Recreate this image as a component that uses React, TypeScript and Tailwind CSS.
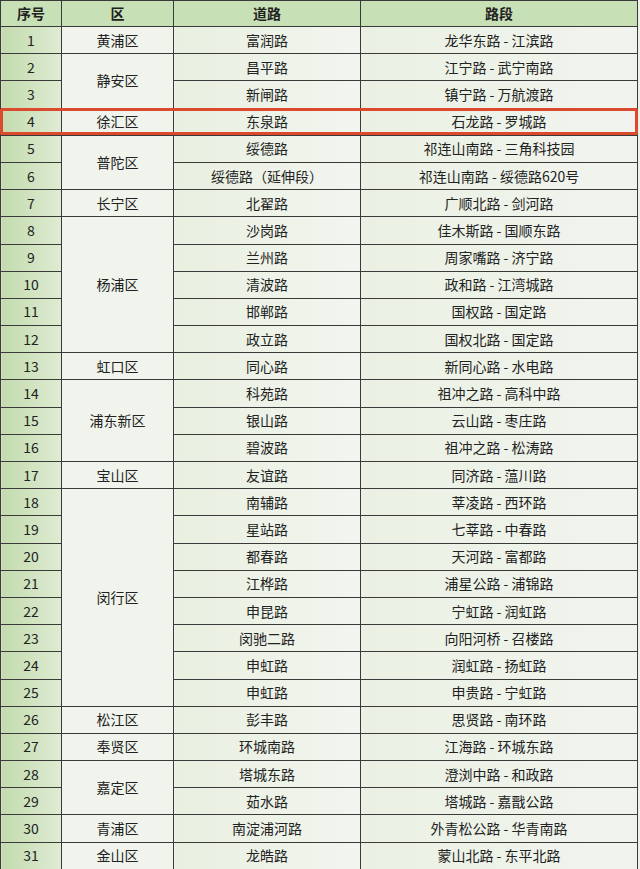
import React from 'react';

type Row = {
  no: number;
  district?: string;
  span?: number;
  road: string;
  section: string;
};

const rows: Row[] = [
  { no: 1, district: '黄浦区', road: '富润路', section: '龙华东路 - 江滨路' },
  { no: 2, district: '静安区', span: 2, road: '昌平路', section: '江宁路 - 武宁南路' },
  { no: 3, road: '新闸路', section: '镇宁路 - 万航渡路' },
  { no: 4, district: '徐汇区', road: '东泉路', section: '石龙路 - 罗城路' },
  { no: 5, district: '普陀区', span: 2, road: '绥德路', section: '祁连山南路 - 三角科技园' },
  { no: 6, road: '绥德路（延伸段）', section: '祁连山南路 - 绥德路620号' },
  { no: 7, district: '长宁区', road: '北翟路', section: '广顺北路 - 剑河路' },
  { no: 8, district: '杨浦区', span: 5, road: '沙岗路', section: '佳木斯路 - 国顺东路' },
  { no: 9, road: '兰州路', section: '周家嘴路 - 济宁路' },
  { no: 10, road: '清波路', section: '政和路 - 江湾城路' },
  { no: 11, road: '邯郸路', section: '国权路 - 国定路' },
  { no: 12, road: '政立路', section: '国权北路 - 国定路' },
  { no: 13, district: '虹口区', road: '同心路', section: '新同心路 - 水电路' },
  { no: 14, district: '浦东新区', span: 3, road: '科苑路', section: '祖冲之路 - 高科中路' },
  { no: 15, road: '银山路', section: '云山路 - 枣庄路' },
  { no: 16, road: '碧波路', section: '祖冲之路 - 松涛路' },
  { no: 17, district: '宝山区', road: '友谊路', section: '同济路 - 蕰川路' },
  { no: 18, district: '闵行区', span: 8, road: '南辅路', section: '莘凌路 - 西环路' },
  { no: 19, road: '星站路', section: '七莘路 - 中春路' },
  { no: 20, road: '都春路', section: '天河路 - 富都路' },
  { no: 21, road: '江桦路', section: '浦星公路 - 浦锦路' },
  { no: 22, road: '申昆路', section: '宁虹路 - 润虹路' },
  { no: 23, road: '闵驰二路', section: '向阳河桥 - 召楼路' },
  { no: 24, road: '申虹路', section: '润虹路 - 扬虹路' },
  { no: 25, road: '申虹路', section: '申贵路 - 宁虹路' },
  { no: 26, district: '松江区', road: '彭丰路', section: '思贤路 - 南环路' },
  { no: 27, district: '奉贤区', road: '环城南路', section: '江海路 - 环城东路' },
  { no: 28, district: '嘉定区', span: 2, road: '塔城东路', section: '澄浏中路 - 和政路' },
  { no: 29, road: '茹水路', section: '塔城路 - 嘉戬公路' },
  { no: 30, district: '青浦区', road: '南淀浦河路', section: '外青松公路 - 华青南路' },
  { no: 31, district: '金山区', road: '龙皓路', section: '蒙山北路 - 东平北路' },
];

export default function App() {
  return (
    <div className="w-[640px] h-[869px] bg-[#eef3ea] overflow-hidden font-['Noto_Sans_CJK_SC','Noto_Sans',sans-serif] text-[#222] text-[14px]">
      <div className="relative w-[637px]">
        <table className="w-[637px] table-fixed border-collapse text-center">
          <colgroup>
            <col className="w-[61px]" />
            <col className="w-[112px]" />
            <col className="w-[187px]" />
            <col className="w-[277px]" />
          </colgroup>
          <thead>
            <tr className="h-[26px] bg-[#c8e0b5] font-bold">
              <th className="border border-[#3a3a3a] p-0">序号</th>
              <th className="border border-[#3a3a3a] p-0">区</th>
              <th className="border border-[#3a3a3a] p-0">道路</th>
              <th className="border border-[#3a3a3a] p-0">路段</th>
            </tr>
          </thead>
          <tbody>
            {rows.map((r) => (
              <tr key={r.no} className="h-[27.2px]">
                <td className="border border-[#3a3a3a] p-0 bg-gradient-to-r from-[#c2dbad] to-[#dfebd3]">{r.no}</td>
                {r.district && (
                  <td rowSpan={r.span ?? 1} className="border border-[#3a3a3a] p-0 bg-[#f0f4ec]">
                    {r.district}
                  </td>
                )}
                <td className="border border-[#3a3a3a] p-0 bg-gradient-to-r from-[#e8f0e0] to-[#f2f5ef]">{r.road}</td>
                <td className="border border-[#3a3a3a] p-0 bg-gradient-to-r from-[#eaf1e3] to-[#f1f4ee]">{r.section}</td>
              </tr>
            ))}
          </tbody>
        </table>
        {/* highlight box on row 4 */}
        <div className="absolute left-0 top-[108px] w-[638px] h-[27px] border-[3px] border-[#dc4a2e] rounded-[2px]" />
      </div>
    </div>
  );
}
